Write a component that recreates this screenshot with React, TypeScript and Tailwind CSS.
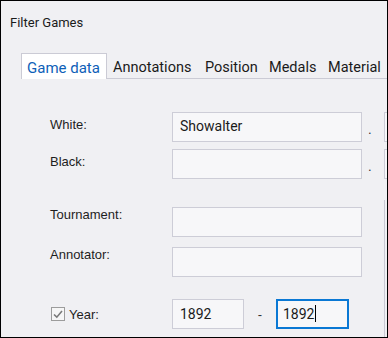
const inputBox =
  'shrink-0 h-[30px] border border-[#cdcdd7] bg-[#f7f7f9] text-[14px] leading-[19px] text-[#1b1b1b]'

function Label({ text, pad }: { text: string; pad: string }) {
  return (
    <div className={`w-[122px] shrink-0 text-[13px] leading-[15px] text-[#1e1e1e] ${pad}`}>
      {text}
    </div>
  )
}

export default function App() {
  return (
    <div className="w-[388px] h-[338px] border border-black bg-[#f0f0f3] overflow-hidden flex flex-col font-['Roboto',sans-serif]">
      {/* Title */}
      <div className="h-[52px] shrink-0 pl-[9px] pt-[13px] text-[13px] leading-[18px] text-[#1b1b1b]">
        Filter Games
      </div>

      {/* Tabs */}
      <div className="flex h-[26px] shrink-0 text-[15px] leading-[20px]">
        <div className="w-[20px] shrink-0" />
        <div className="w-[86px] shrink-0 border border-b-0 border-[#cbcbd5] bg-white pl-[5px] pt-[4px] text-[#0e5fb8] whitespace-nowrap">
          Game data
        </div>
        <div className="flex-1 flex border-b border-[#cbcbd5] pl-[6px] pt-[5px] text-[14.5px] text-[#1a1a1a] whitespace-nowrap">
          <span className="w-[92px] shrink-0">Annotations</span>
          <span className="w-[64px] shrink-0">Position</span>
          <span className="w-[59px] shrink-0">Medals</span>
          <span className="shrink-0">Material</span>
        </div>
      </div>

      {/* Players */}
      <div className="flex flex-col gap-[7px] pt-[33px] pl-[49px] font-['Liberation_Sans',Arial,sans-serif]">
        {['White:', 'Black:'].map((label) => (
          <div key={label} className="flex h-[30px]">
            <Label text={label} pad="pt-[5px]" />
            <div className={`${inputBox} w-[190px] pl-[7px] pt-[4px] font-['Roboto',sans-serif]`}>
              {label === 'White:' ? 'Showalter' : ''}
            </div>
            <div className="w-[22px] shrink-0 pl-[6px] pt-[10px] text-[13px] leading-[15px] text-[#333]">.</div>
            <div className={`${inputBox} w-[60px]`} />
          </div>
        ))}
      </div>

      {/* Event, annotator, year */}
      <div className="mt-[21px] flex flex-1">
        <div className="w-[383px] shrink-0 flex flex-col pt-[7px] pl-[49px] font-['Liberation_Sans',Arial,sans-serif]">
          <div className="flex h-[30px]">
            <Label text="Tournament:" pad="pt-0" />
            <div className={`${inputBox} w-[190px]`} />
          </div>
          <div className="flex h-[30px] mt-[10px]">
            <Label text="Annotator:" pad="pt-0" />
            <div className={`${inputBox} w-[190px]`} />
          </div>
          <div className="flex items-center h-[30px] mt-[22px]">
            <div className="w-[122px] shrink-0 flex items-center text-[13px] leading-[15px] text-[#1e1e1e]">
              <span className="ml-[1px] w-[14px] h-[14px] border border-[#9c9c9c] bg-[#f6f6f6] flex items-center justify-center">
                <svg width="12" height="12" viewBox="0 0 12 12" fill="none">
                  <polyline points="2,6.5 4.8,9.2 10,3" stroke="#7a7a7a" strokeWidth="1.6" />
                </svg>
              </span>
              <span className="ml-[4px]">Year:</span>
            </div>
            <div className={`${inputBox} w-[72px] pl-[7px] pt-[5px] font-['Roboto',sans-serif]`}>1892</div>
            <div className="w-[32px] shrink-0 flex justify-center text-[13px] leading-[15px] text-[#333]">-</div>
            <div className="shrink-0 w-[73px] h-[30px] border-2 border-[#0a78d4] bg-[#f7f7f9] flex items-start pl-[5px] font-['Roboto',sans-serif] text-[14px] leading-[19px] text-[#1b1b1b]">
              <span className="mt-[4px]">1892</span>
              <span className="ml-[1px] mt-[4px] w-px h-[17px] bg-black" />
            </div>
          </div>
        </div>
        <div className="flex-1 border-l border-[#c9c9d3]" />
      </div>
    </div>
  )
}
